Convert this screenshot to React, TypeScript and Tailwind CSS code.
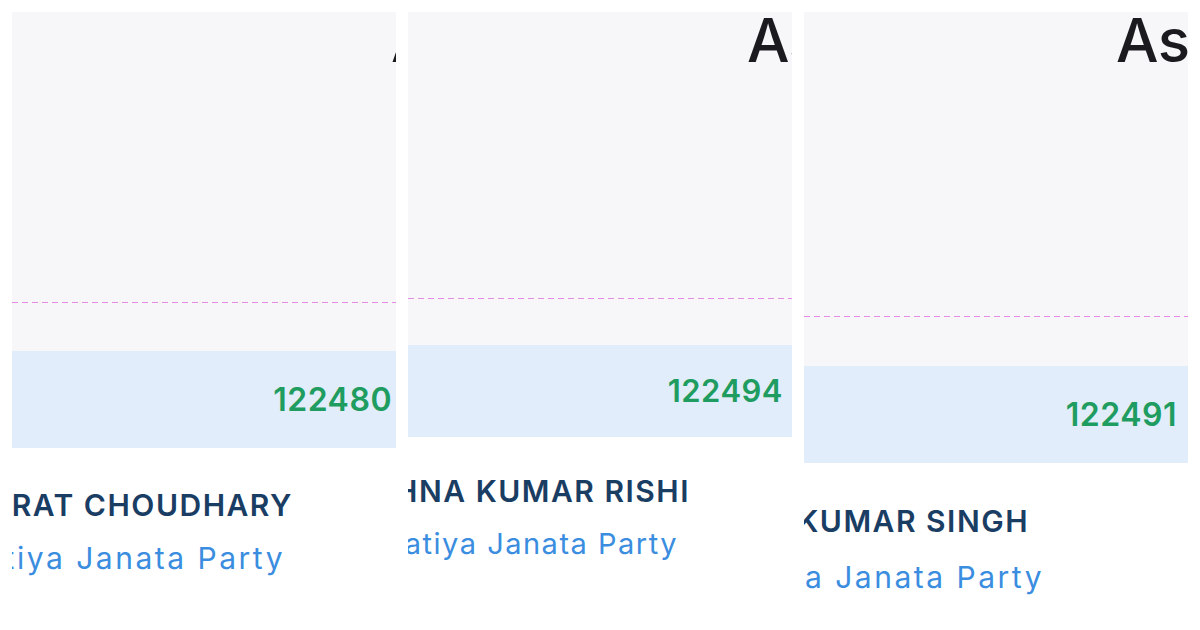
import React from "react";

type P = {
  headCls: string;
  grayCls: string;
  dashCls: string;
  bandCls: string;
  numCls: string;
  num: string;
  nameCls: string;
  name: string;
  partyCls: string;
  partyTextCls: string;
  party: string;
};

function Panel({ headCls, grayCls, dashCls, bandCls, numCls, num, nameCls, name, partyCls, partyTextCls, party }: P) {
  return (
    <div className="w-[384px] shrink-0 overflow-hidden flex flex-col font-['Inter','Open_Sans','Liberation_Sans',sans-serif]">
      <div className={"bg-[#f7f7f9] flex flex-col " + grayCls}>
        <div
          className={
            "whitespace-nowrap text-[60px] leading-none font-medium text-[#1b1b1f] mt-[-2px] tracking-[-0.5px] " +
            headCls
          }
        >
          Assembly
        </div>
        <div className="mt-auto h-px w-full bg-[linear-gradient(to_right,#e58be3_60%,transparent_60%)] bg-[length:10px_1px]" />
        <div className={dashCls} />
      </div>
      <div className={"bg-[#e1edfb] flex items-center justify-end " + bandCls}>
        <span className={"font-semibold text-[#1f9c60] tracking-[0.5px] " + numCls}>{num}</span>
      </div>
      <div className={"flex justify-end " + nameCls}>
        <span className="whitespace-nowrap text-[30px] leading-[36px] font-semibold text-[#1a3d64] tracking-[1.5px]">
          {name}
        </span>
      </div>
      <div className={"flex justify-end " + partyCls}>
        <span className={"whitespace-nowrap leading-[36px] text-[#3a8ddf] " + partyTextCls}>{party}</span>
      </div>
    </div>
  );
}

export default function App() {
  return (
    <div className="w-[1200px] h-[630px] bg-white overflow-hidden flex gap-[12px] pl-[12px] pt-[12px]">
      <Panel
        headCls="pl-[379px]"
        grayCls="h-[339px]"
        dashCls="h-[48px]"
        bandCls="h-[97px] pr-[4px]"
        numCls="text-[32px]"
        num="122480"
        nameCls="mt-[39px] w-[281px]"
        name="SAMRAT CHOUDHARY"
        partyCls="mt-[17px] w-[273px]"
        partyTextCls="text-[30px] tracking-[2.5px]"
        party="Bharatiya Janata Party"
      />
      <Panel
        headCls="pl-[339px]"
        grayCls="h-[333px]"
        dashCls="h-[46px]"
        bandCls="h-[92px] pr-[9px]"
        numCls="text-[31px]"
        num="122494"
        nameCls="mt-[36px] w-[282px]"
        name="KRISHNA KUMAR RISHI"
        partyCls="mt-[17px] w-[270px]"
        partyTextCls="text-[29px] tracking-[1.5px]"
        party="Bharatiya Janata Party"
      />
      <Panel
        headCls="pl-[312px]"
        grayCls="h-[354px]"
        dashCls="h-[49px]"
        bandCls="h-[97px] pr-[11px]"
        numCls="text-[32px]"
        num="122491"
        nameCls="mt-[40px] w-[225px]"
        name="ARVIND KUMAR SINGH"
        partyCls="mt-[20px] w-[240px]"
        partyTextCls="text-[30px] tracking-[2.5px]"
        party="Bharatiya Janata Party"
      />
    </div>
  );
}
